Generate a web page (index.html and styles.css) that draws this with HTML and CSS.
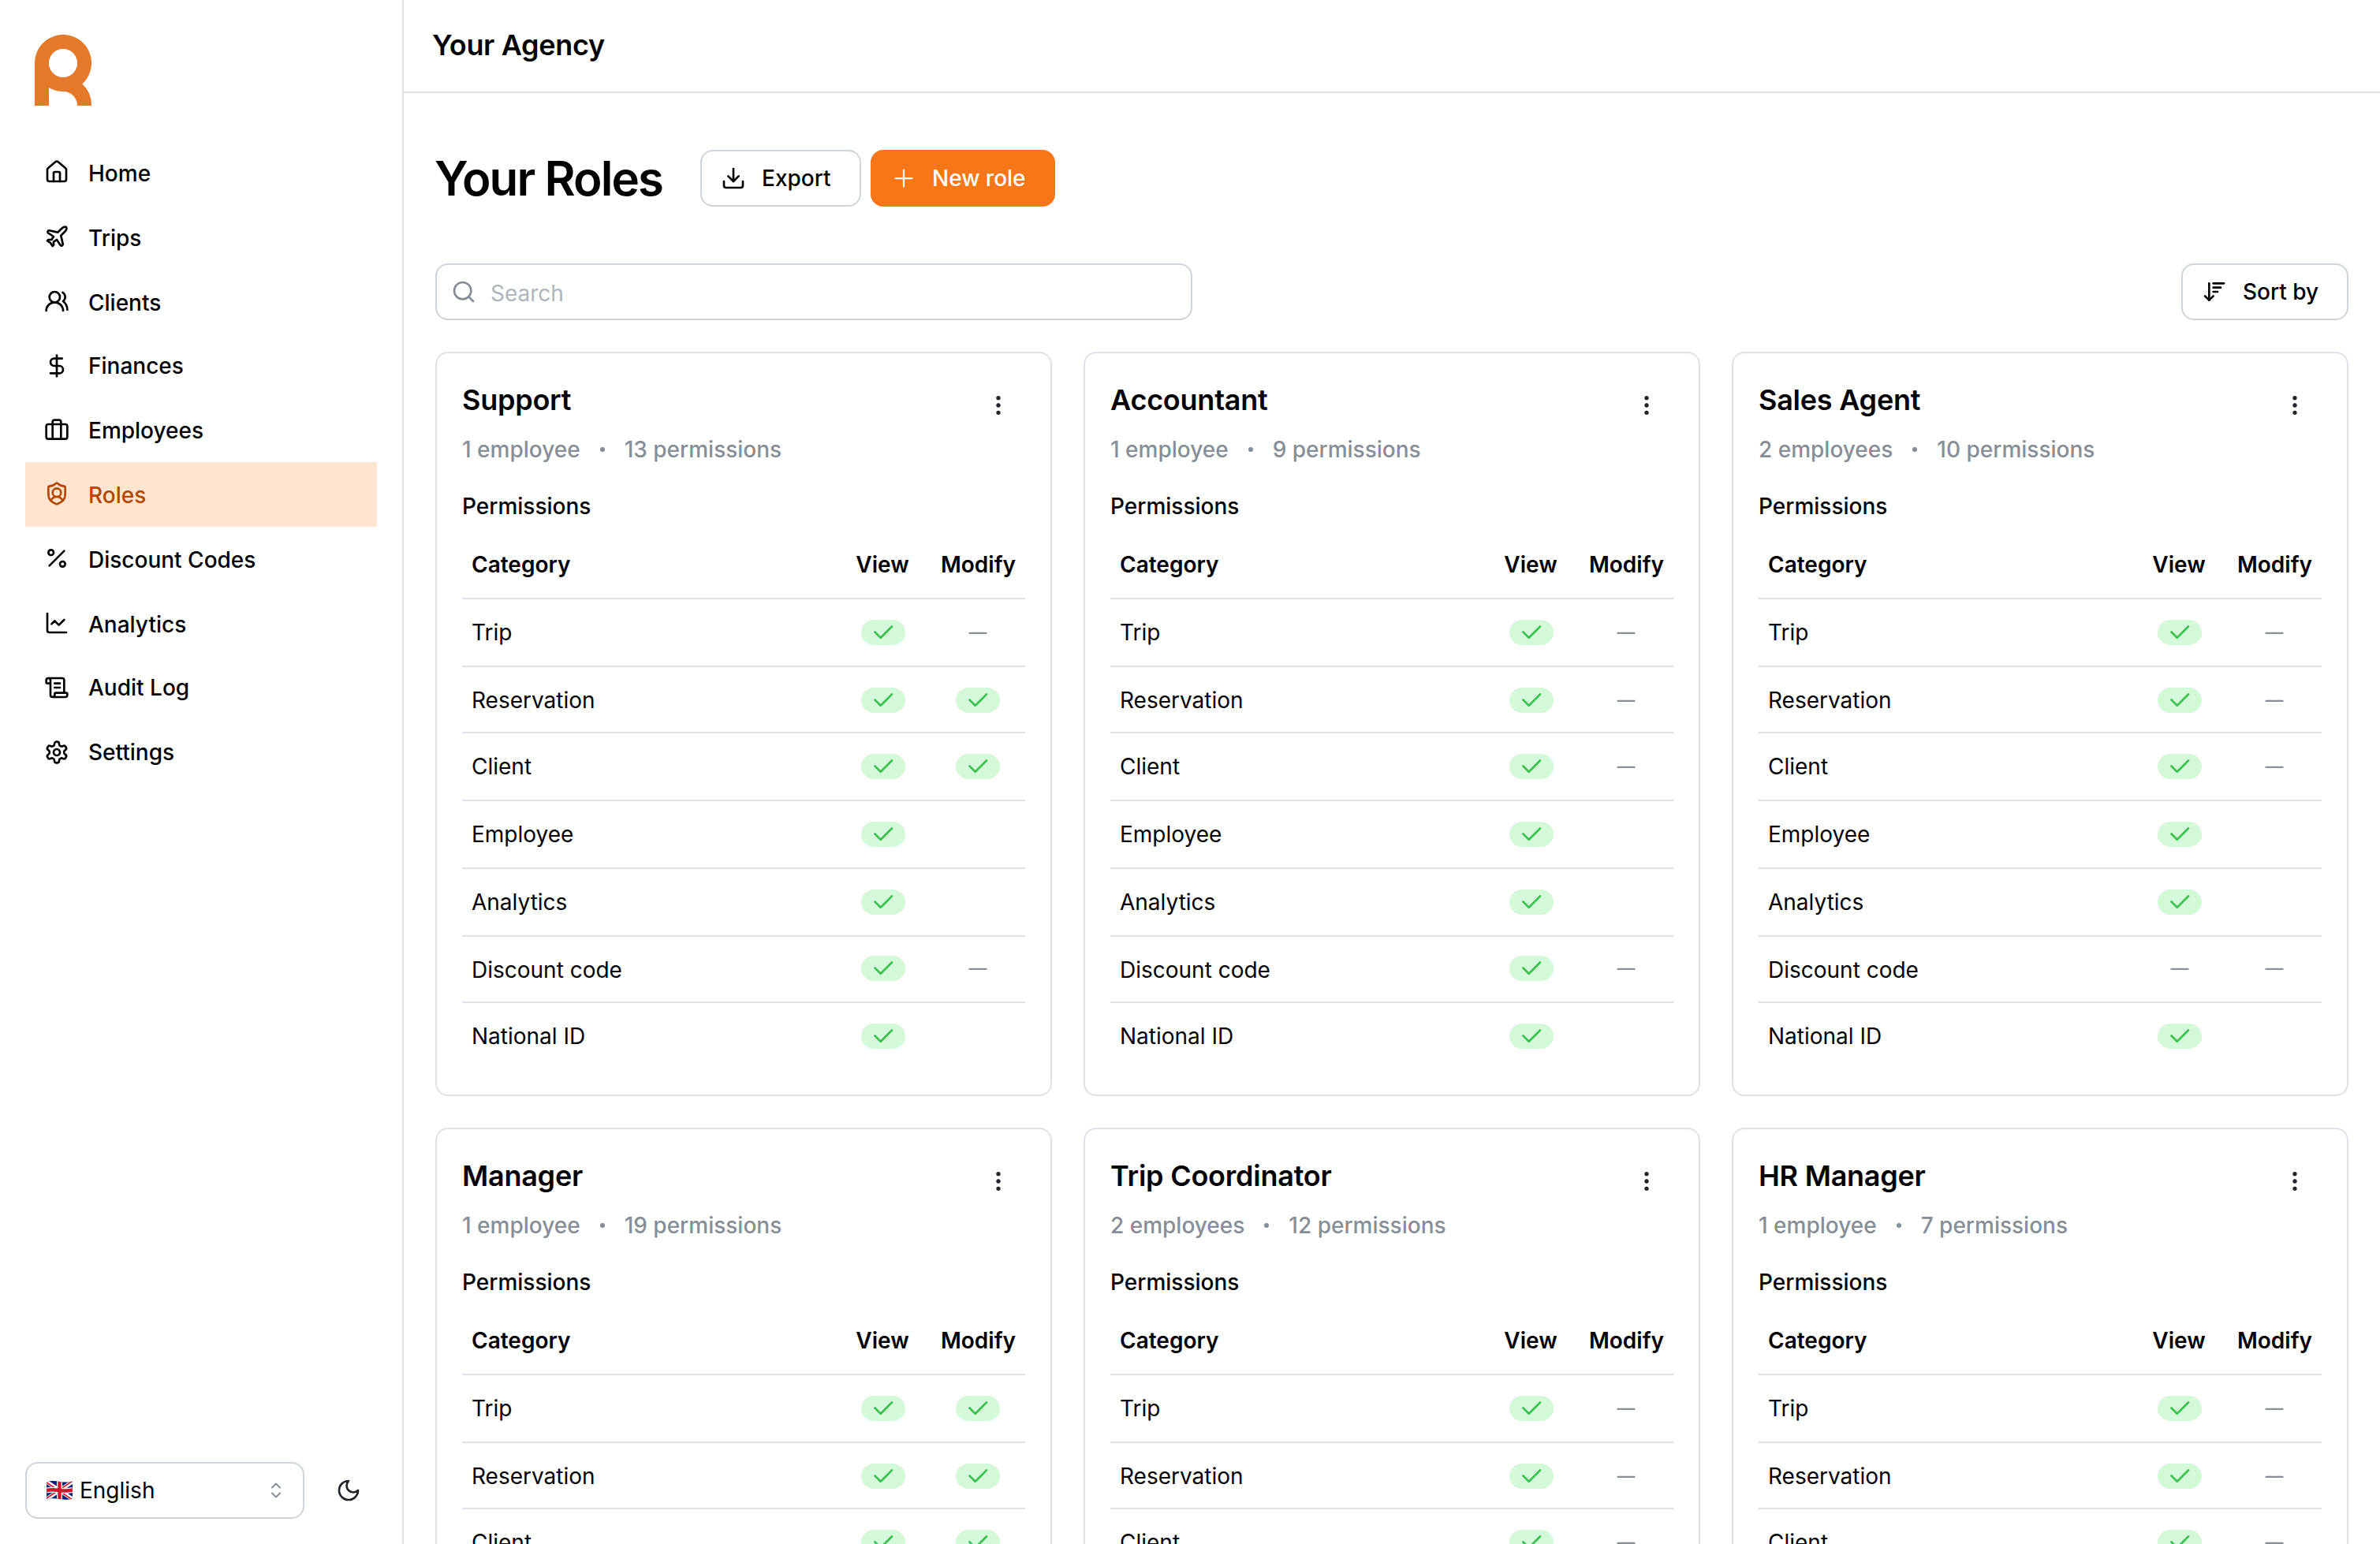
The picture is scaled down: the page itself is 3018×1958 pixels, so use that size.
FILE: index.html
```html
<!DOCTYPE html>
<html lang="en">
<head>
<meta charset="utf-8">
<title>Your Roles</title>
<link rel="stylesheet" href="styles.css">
</head>
<body>
<svg class="sprite" width="0" height="0" aria-hidden="true">
  <symbol id="i-home" viewBox="0 0 24 24"><path d="M15 21v-8a1 1 0 0 0-1-1h-4a1 1 0 0 0-1 1v8"/><path d="M3 10a2 2 0 0 1 .709-1.528l7-5.999a2 2 0 0 1 2.582 0l7 5.999A2 2 0 0 1 21 10v9a2 2 0 0 1-2 2H5a2 2 0 0 1-2-2z"/></symbol>
  <symbol id="i-plane" viewBox="0 0 24 24"><path d="M17.8 19.2 16 11l3.5-3.5C21 6 21.5 4 21 3c-1-.5-3 0-4.5 1.5L13 8 4.8 6.2c-.5-.1-.9.1-1.1.5l-.3.5c-.2.5-.1 1 .3 1.3L9 12l-2 3H4l-1 1 3 2 2 3 1-1v-3l3-2 3.5 5.3c.3.4.8.5 1.3.3l.5-.2c.4-.3.6-.7.5-1.2z"/></symbol>
  <symbol id="i-users" viewBox="0 0 24 24"><path d="M18 21a8 8 0 0 0-16 0"/><circle cx="10" cy="8" r="5"/><path d="M22 20c0-3.37-2-6.5-4-8a5 5 0 0 0-.45-8.3"/></symbol>
  <symbol id="i-dollar" viewBox="0 0 24 24"><path d="M12 2v20"/><path d="M17 5H9.5a3.5 3.5 0 0 0 0 7h5a3.5 3.5 0 0 1 0 7H6"/></symbol>
  <symbol id="i-briefcase" viewBox="0 0 24 24"><path d="M16 20V4a2 2 0 0 0-2-2h-4a2 2 0 0 0-2 2v16"/><rect x="2" y="6" width="20" height="14" rx="2"/></symbol>
  <symbol id="i-shield" viewBox="0 0 24 24"><path d="M20 13c0 5-3.5 7.5-7.66 8.95a1 1 0 0 1-.67-.01C7.5 20.5 4 18 4 13V6a1 1 0 0 1 1-1c2 0 4.5-1.2 6.24-2.72a1.17 1.17 0 0 1 1.52 0C14.51 3.81 17 5 19 5a1 1 0 0 1 1 1z"/><path d="M6.376 18.91a6 6 0 0 1 11.249.003"/><circle cx="12" cy="11" r="4"/></symbol>
  <symbol id="i-percent" viewBox="0 0 24 24"><path d="M19 5 5 19"/><circle cx="6.5" cy="6.5" r="2.5"/><circle cx="17.5" cy="17.5" r="2.5"/></symbol>
  <symbol id="i-chart" viewBox="0 0 24 24"><path d="M3 3v16a2 2 0 0 0 2 2h16"/><path d="m19 9-5 5-4-4-3 3"/></symbol>
  <symbol id="i-scroll" viewBox="0 0 24 24"><path d="M15 12h-5"/><path d="M15 8h-5"/><path d="M19 17V5a2 2 0 0 0-2-2H4"/><path d="M8 21h12a2 2 0 0 0 2-2v-1a1 1 0 0 0-1-1H11a1 1 0 0 0-1 1v1a2 2 0 1 1-4 0V5a2 2 0 1 0-4 0v2a1 1 0 0 0 1 1h3"/></symbol>
  <symbol id="i-gear" viewBox="0 0 24 24"><path d="M12.22 2h-.44a2 2 0 0 0-2 2v.18a2 2 0 0 1-1 1.73l-.43.25a2 2 0 0 1-2 0l-.15-.08a2 2 0 0 0-2.73.73l-.22.38a2 2 0 0 0 .73 2.73l.15.1a2 2 0 0 1 1 1.72v.51a2 2 0 0 1-1 1.74l-.15.09a2 2 0 0 0-.73 2.73l.22.38a2 2 0 0 0 2.73.73l.15-.08a2 2 0 0 1 2 0l.43.25a2 2 0 0 1 1 1.73V20a2 2 0 0 0 2 2h.44a2 2 0 0 0 2-2v-.18a2 2 0 0 1 1-1.73l.43-.25a2 2 0 0 1 2 0l.15.08a2 2 0 0 0 2.73-.73l.22-.39a2 2 0 0 0-.73-2.73l-.15-.08a2 2 0 0 1-1-1.74v-.5a2 2 0 0 1 1-1.74l.15-.09a2 2 0 0 0 .73-2.73l-.22-.38a2 2 0 0 0-2.73-.73l-.15.08a2 2 0 0 1-2 0l-.43-.25a2 2 0 0 1-1-1.73V4a2 2 0 0 0-2-2z"/><circle cx="12" cy="12" r="3"/></symbol>
  <symbol id="i-moon" viewBox="0 0 24 24"><path d="M12 3a6 6 0 0 0 9 9 9 9 0 1 1-9-9Z"/></symbol>
  <symbol id="i-download" viewBox="0 0 24 24"><path d="M21 15v4a2 2 0 0 1-2 2H5a2 2 0 0 1-2-2v-4"/><path d="m7 10 5 5 5-5"/><path d="M12 15V3"/></symbol>
  <symbol id="i-plus" viewBox="0 0 24 24"><path d="M12 5v14"/><path d="M5 12h14"/></symbol>
  <symbol id="i-search" viewBox="0 0 24 24"><circle cx="11" cy="11" r="8"/><path d="m21 21-4.3-4.3"/></symbol>
  <symbol id="i-sort" viewBox="0 0 24 24"><path d="m3 16 4 4 4-4"/><path d="M7 20V4"/><path d="M11 4h10"/><path d="M11 8h7"/><path d="M11 12h4"/></symbol>
  <symbol id="i-dots" viewBox="0 0 24 24"><circle cx="12" cy="5" r="1"/><circle cx="12" cy="12" r="1"/><circle cx="12" cy="19" r="1"/></symbol>
  <symbol id="i-check" viewBox="0 0 24 24"><path d="M5 11.700l4.800 4.800L19.300 7"/></symbol>
  <symbol id="i-minus" viewBox="0 0 24 24"><path d="M5 12.600h14"/></symbol>
  <symbol id="i-selector" viewBox="0 0 12 20"><path d="M1 6.500 6 1.500l5 5"/><path d="M1 13.500l5 5 5-5"/></symbol>
</svg>

<div class="app">
  <aside class="sidebar">
    <svg class="logo" viewBox="0 0 72 90"><path fill="#e4792a" fill-rule="evenodd" d="M0 90V36a36 36 0 1 1 60.3 26.5A36 36 0 0 1 72 90H54A18 18 0 0 0 36 72a36 36 0 0 1-18-4.8V90ZM36 18a18 18 0 1 0 0 36a18 18 0 0 0 0-36Z"/></svg>
    <nav class="nav">
      <a class="nav-item"><svg class="icon"><use href="#i-home"/></svg><span>Home</span></a>
      <a class="nav-item"><svg class="icon"><use href="#i-plane"/></svg><span>Trips</span></a>
      <a class="nav-item short"><svg class="icon"><use href="#i-users"/></svg><span>Clients</span></a>
      <a class="nav-item low"><svg class="icon"><use href="#i-dollar"/></svg><span>Finances</span></a>
      <a class="nav-item low"><svg class="icon"><use href="#i-briefcase"/></svg><span>Employees</span></a>
      <a class="nav-item active"><svg class="icon"><use href="#i-shield"/></svg><span>Roles</span></a>
      <a class="nav-item"><svg class="icon"><use href="#i-percent"/></svg><span>Discount Codes</span></a>
      <a class="nav-item short"><svg class="icon"><use href="#i-chart"/></svg><span>Analytics</span></a>
      <a class="nav-item low"><svg class="icon"><use href="#i-scroll"/></svg><span>Audit Log</span></a>
      <a class="nav-item low"><svg class="icon"><use href="#i-gear"/></svg><span>Settings</span></a>
    </nav>
    <div class="sidebar-foot">
      <div class="lang">
        <svg class="flag" viewBox="0 0 33 24">
          <clipPath id="wave"><path d="M0 1.500C6 -.8 11 .2 16.500 1S27 2 33 .4V22.500C27 24.500 22 23.800 16.500 23S6 21.500 0 23.500Z"/></clipPath>
          <g clip-path="url(#wave)">
            <path fill="#00247d" d="M0 0h33v24H0z"/>
            <path stroke="#fff" stroke-width="5" d="M0 1l33 22M33 1L0 23"/>
            <path stroke="#cf142b" stroke-width="1.600" d="M0 2l33 22M33 0L0 22"/>
            <path fill="none" stroke="#fff" stroke-width="7" d="M16.500 0v24M0 12c6-1.500 11-.8 16.500 0S27 13 33 11.500"/>
            <path fill="none" stroke="#cf142b" stroke-width="4.400" d="M16.500 0v24M0 12c6-1.500 11-.8 16.500 0S27 13 33 11.500"/>
          </g>
        </svg>
        <span>English</span>
        <svg class="selector"><use href="#i-selector"/></svg>
      </div>
      <svg class="icon moon"><use href="#i-moon"/></svg>
    </div>
  </aside>

  <div class="content">
    <header class="topbar">Your Agency</header>
    <main class="main">
      <div class="title-row">
        <h1 class="title">Your Roles</h1>
        <button class="btn btn-export"><svg class="icon"><use href="#i-download"/></svg><span>Export</span></button>
        <button class="btn btn-primary"><svg class="icon-md"><use href="#i-plus"/></svg><span>New role</span></button>
      </div>
      <div class="tools">
        <div class="search"><svg class="icon"><use href="#i-search"/></svg><span>Search</span></div>
        <button class="btn btn-sort"><svg class="icon"><use href="#i-sort"/></svg><span>Sort by</span></button>
      </div>
      <div class="cards" id="cards"></div>
    </main>
  </div>
</div>
<script src="roles.js"></script>
</body>
</html>
```

FILE: styles.css
```css
* { box-sizing: border-box; }

body {
  margin: 0;
  background: #fff;
  color: #000;
  font-family: Inter, "Liberation Sans", sans-serif;
  font-size: 28px;
  line-height: 44px;
}

.sprite { position: absolute; }

svg {
  display: block;
  flex: none;
  fill: none;
}

.icon, .icon-md, .selector {
  width: 32px;
  height: 32px;
  stroke: currentColor;
  stroke-width: 2;
  stroke-linecap: round;
  stroke-linejoin: round;
}

.icon-md {
  width: 36px;
  height: 36px;
  stroke-width: 1.5;
}

.app {
  display: flex;
  height: 1958px;
  overflow: hidden;
}

/* Sidebar */
.sidebar {
  display: flex;
  flex: none;
  flex-direction: column;
  width: 512px;
  padding: 44px 32px 32px;
  border-right: 2px solid #dee2e6;
}

.logo {
  width: 72px;
  height: 90px;
  margin: 0 0 44px 12px;
}

.nav { flex: 1; }

.nav-item {
  display: flex;
  align-items: flex-start;
  gap: 24px;
  height: 82px;
  padding: 20px 24px 0;
  font-weight: 500;
}

.nav-item.short { height: 80px; }
.nav-item .icon { margin-top: 4px; }
.nav-item.low .icon { margin-top: 6px; }

.nav-item.active {
  background: #ffe4d0;
  color: #b34700;
}

.sidebar-foot {
  display: flex;
  align-items: center;
}

.lang {
  display: flex;
  align-items: center;
  width: 354px;
  height: 72px;
  padding: 0 28px 0 25px;
  border: 2px solid #ced4da;
  border-radius: 16px;
}

.flag {
  width: 33px;
  height: 24px;
  margin-right: 9px;
}

.selector {
  width: 12px;
  height: 20px;
  margin-left: auto;
  color: #868e96;
}

.moon {
  margin-left: 40px;
  color: #212529;
}

/* Main area */
.content {
  flex: 1;
  min-width: 0;
}

.topbar {
  height: 118px;
  padding: 34px 36px 0;
  border-bottom: 2px solid #dee2e6;
  font-size: 36px;
  font-weight: 600;
  letter-spacing: -0.33px;
  line-height: 46px;
}

.main { padding: 72px 40px 0; }

.title-row {
  display: flex;
  align-items: center;
  gap: 12px;
}

.title {
  width: 324px;
  margin: 0;
  font-size: 60px;
  font-weight: 600;
  letter-spacing: -1.9px;
  line-height: 72px;
  text-indent: -1px;
  white-space: nowrap;
}

.btn {
  display: flex;
  align-items: center;
  gap: 20px;
  height: 72px;
  padding: 0 24px;
  border: 2px solid #ced4da;
  border-radius: 16px;
  background: #fff;
  color: #000;
  font: inherit;
  font-weight: 500;
  white-space: nowrap;
}

.btn-export { width: 204px; }

.btn-primary {
  gap: 18px;
  width: 234px;
  padding-left: 22px;
  border-color: #f77617;
  background: #f77617;
  color: #fff;
}

.tools {
  display: flex;
  justify-content: space-between;
  margin: 72px 0 40px;
}

.search {
  display: flex;
  align-items: flex-start;
  gap: 18px;
  width: 960px;
  height: 72px;
  padding: 14px 18px 0;
  border: 2px solid #ced4da;
  border-radius: 16px;
  color: #adb5bd;
}

.search .icon {
  margin-top: 4px;
  color: #868e96;
}

.btn-sort { width: 212px; }

/* Role cards */
.cards {
  display: grid;
  grid-template-columns: repeat(3, 1fr);
  gap: 40px;
}

.card {
  height: 944px;
  padding: 36px 32px 0;
  border: 2px solid #dee2e6;
  border-radius: 16px;
}

.card-head {
  display: flex;
  justify-content: space-between;
  height: 46px;
}

.card-name {
  margin: 0;
  font-size: 36px;
  font-weight: 600;
  letter-spacing: -0.24px;
  line-height: 46px;
}

.card-head .icon {
  margin: 14px 18px 0 0;
  color: #212529;
}

.meta {
  display: flex;
  align-items: center;
  gap: 25px;
  margin-top: 18px;
  color: #868e96;
  font-weight: 500;
}

.dot {
  width: 6px;
  height: 6px;
  border-radius: 50%;
  background: currentColor;
}

.label {
  margin-top: 28px;
  font-weight: 500;
}

.row {
  display: grid;
  grid-template-columns: 1fr 120px 120px;
  height: 86px;
  padding-top: 20px;
  border-bottom: 2px solid #dee2e6;
}

.row.head {
  margin-top: 10px;
  font-weight: 600;
}

.row:nth-child(3), .row:nth-child(7) { height: 84px; }
.row:last-child { border-bottom: 0; }

.row > :first-child { padding-left: 12px; }
.row > :not(:first-child) { text-align: center; }
.row.head > :nth-child(2) { padding-right: 2px; }
.row.head > :nth-child(3) { padding-left: 1px; }

.mark {
  display: flex;
  justify-content: center;
  justify-self: center;
  align-items: center;
  width: 56px;
  height: 32px;
  margin-top: 6px;
  border-radius: 16px;
}

.row:nth-child(7) .mark { margin-top: 4px; }

.mark.yes {
  background: #d3f9d8;
  color: #40c057;
}

.mark.yes .icon-md { stroke-width: 1.85; }

.mark.no { color: #868e96; }
```

FILE: roles.js
```js
// Each permission string holds one "view modify" pair per category:
// y = granted, n = denied, . = not applicable.
const categories = ['Trip', 'Reservation', 'Client', 'Employee', 'Analytics', 'Discount code', 'National ID'];
const roles = [
  { name: 'Support', employees: '1 employee', permissions: '13 permissions', grid: 'yn yy yy y. y. yn y.' },
  { name: 'Accountant', employees: '1 employee', permissions: '9 permissions', grid: 'yn yn yn y. y. yn y.' },
  { name: 'Sales Agent', employees: '2 employees', permissions: '10 permissions', grid: 'yn yn yn y. y. nn y.' },
  { name: 'Manager', employees: '1 employee', permissions: '19 permissions', grid: 'yy yy yy y. y. yy y.' },
  { name: 'Trip Coordinator', employees: '2 employees', permissions: '12 permissions', grid: 'yn yn yn y. y. yn y.' },
  { name: 'HR Manager', employees: '1 employee', permissions: '7 permissions', grid: 'yn yn yn y. y. nn y.' }
];

const mark = (flag) => {
  if (flag === 'y') return '<span class="mark yes"><svg class="icon-md"><use href="#i-check"/></svg></span>';
  if (flag === 'n') return '<span class="mark no"><svg class="icon-md"><use href="#i-minus"/></svg></span>';
  return '<span></span>';
};

document.getElementById('cards').innerHTML = roles.map((role) => {
  const grid = role.grid.split(' ');
  const rows = categories.map((category, i) =>
    `<div class="row"><span>${category}</span>${mark(grid[i][0])}${mark(grid[i][1])}</div>`).join('');
  return `<section class="card">
    <div class="card-head"><h2 class="card-name">${role.name}</h2><svg class="icon"><use href="#i-dots"/></svg></div>
    <div class="meta"><span>${role.employees}</span><i class="dot"></i><span>${role.permissions}</span></div>
    <div class="label">Permissions</div>
    <div class="table"><div class="row head"><span>Category</span><span>View</span><span>Modify</span></div>${rows}</div>
  </section>`;
}).join('');
```
